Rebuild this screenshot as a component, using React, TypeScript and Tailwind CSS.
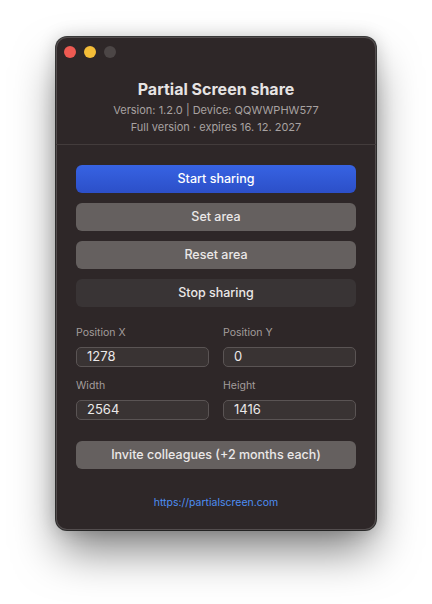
import React from "react";

const font = { fontFamily: "Inter, 'Noto Sans', 'Liberation Sans', sans-serif" };

function Field({ label, value }: { label: string; value: string }) {
  return (
    <div className="flex flex-col">
      <span className="text-[10.5px] leading-[14px] text-[#a39d9c]">{label}</span>
      <div className="mt-[7px] flex h-5 items-center rounded-[5px] border border-[#5a5454] bg-[#393333] px-[10px] text-[13px] text-[#ebe8e8]">
        {value}
      </div>
    </div>
  );
}

export default function App() {
  return (
    <div className="h-[604px] w-[432px] overflow-hidden bg-white pl-[56px] pt-[37px]" style={font}>
      <div className="flex h-[493px] w-[320px] flex-col rounded-[11px] bg-[#2e2728] shadow-[inset_0_0_0_1px_rgba(255,255,255,0.18),0_0_0_1px_rgba(0,0,0,0.75),0_24px_45px_-4px_rgba(0,0,0,0.5),0_0_18px_rgba(0,0,0,0.18)]">
        {/* title bar */}
        <div className="flex gap-2 pl-2 pt-[9px]">
          <span className="h-3 w-3 rounded-full bg-[#ee5a52]" />
          <span className="h-3 w-3 rounded-full bg-[#f4bd38]" />
          <span className="h-3 w-3 rounded-full bg-[#4c4646]" />
        </div>

        {/* header */}
        <h1 className="mt-[21px] text-center text-[16px] font-bold leading-5 text-[#e6e3e3]">Partial Screen share</h1>
        <p className="mt-[3px] text-center text-[11px] leading-[17px] text-[#a8a2a1]">Version: 1.2.0 | Device: QQWWPHW577</p>
        <p className="text-center text-[11px] leading-[17px] text-[#a8a2a1]">Full version · expires 16. 12. 2027</p>
        <div className="mt-2 h-px bg-[#433c3c]" />

        <div className="flex flex-col px-5">
          {/* actions */}
          <div className="mt-5 flex flex-col gap-[10px] text-[12.5px] font-medium text-[#ebe8e8]">
            <button className="h-7 rounded-[6px] bg-gradient-to-b from-[#3763e3] to-[#2c4fc8] text-white">Start sharing</button>
            <button className="h-7 rounded-[6px] bg-[#65605f]">Set area</button>
            <button className="h-7 rounded-[6px] bg-[#65605f]">Reset area</button>
            <button className="h-7 rounded-[6px] bg-[#393435]">Stop sharing</button>
          </div>

          {/* area fields */}
          <div className="mt-[19px] grid grid-cols-2 gap-x-[14px] gap-y-3">
            <Field label="Position X" value="1278" />
            <Field label="Position Y" value="0" />
            <Field label="Width" value="2564" />
            <Field label="Height" value="1416" />
          </div>

          <button className="mt-[21px] h-7 rounded-[6px] bg-[#65605f] text-[12.5px] font-medium text-[#ebe8e8]">
            Invite colleagues (+2 months each)
          </button>

          <a className="mt-[26px] text-center text-[10.5px] leading-4 text-[#4d8ef2]">https://partialscreen.com</a>
        </div>
      </div>
    </div>
  );
}
